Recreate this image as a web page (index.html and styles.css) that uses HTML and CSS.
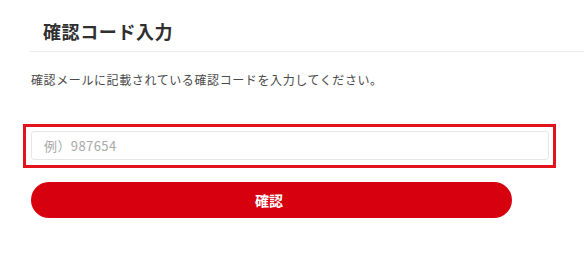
FILE: index.html
```html
<!DOCTYPE html>
<html lang="ja">
<head>
<meta charset="utf-8">
<title>確認コード入力</title>
<link rel="stylesheet" href="styles.css">
</head>
<body>
<main class="main">
  <header class="header">
    <h1 class="title">確認コード入力</h1>
  </header>
  <p class="desc">確認メールに記載されている確認コードを入力してください。</p>
  <div class="field-box">
    <input class="code-input" type="text" placeholder="例）987654">
  </div>
  <button class="submit" type="button">確認</button>
</main>
</body>
</html>
```
FILE: styles.css
```css
html, body {
  margin: 0;
  padding: 0;
  background: #ffffff;
}
body {
  font-family: "Noto Sans CJK JP", "Noto Sans", sans-serif;
  color: #333333;
}
.main {
  padding-left: 30px;
}
.header {
  padding: 18px 0 7px 13px;
  border-bottom: 1px solid #ebebeb;
}
.title {
  margin: 0;
  font-size: 18px;
  line-height: 26px;
  font-weight: 700;
  letter-spacing: 0.6px;
  color: #2f2f2f;
}
.desc {
  margin: 19px 0 0 1px;
  font-size: 12px;
  line-height: 18px;
  letter-spacing: 0.6px;
  color: #4a4a4a;
}
.field-box {
  margin: 35px 0 0 -7px;
  width: 520px;
  border: 3px solid #e3131b;
  padding: 4px 2px 5px 5px;
}
.code-input {
  display: block;
  box-sizing: border-box;
  width: 518px;
  height: 29px;
  margin: 0;
  padding: 0 12px;
  border: 1px solid #e6e6e6;
  border-radius: 3px;
  font-family: "Noto Sans CJK JP", "Noto Sans", sans-serif;
  font-size: 13px;
  letter-spacing: 0.4px;
  color: #333333;
  outline: none;
}
.code-input::placeholder {
  color: #a8a8a8;
}
.submit {
  display: block;
  margin: 14px 0 0 1px;
  width: 481px;
  height: 36px;
  border: none;
  border-radius: 18px;
  background: #d7000f;
  color: #ffffff;
  font-family: "Noto Sans CJK JP", "Noto Sans", sans-serif;
  font-size: 14px;
  font-weight: 700;
  padding: 0 5px 0 0;
}
```
